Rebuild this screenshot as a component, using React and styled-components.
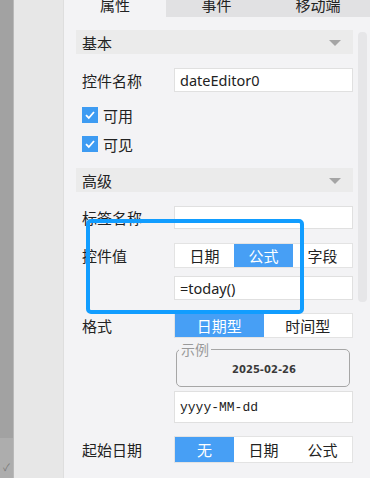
import React from 'react';
import styled, { createGlobalStyle } from 'styled-components';

const GlobalStyle = createGlobalStyle`
  body {
    margin: 0;
    font-family: "Noto Sans CJK SC", "Noto Sans", sans-serif;
    overflow: hidden;
  }
`;

const Page = styled.div`
  position: relative;
  display: flex;
  width: 370px;
  height: 478px;
  overflow: hidden;
  background: #f3f3f5;
`;

const DarkStrip = styled.div`
  width: 13px;
  display: flex;
  flex-direction: column;
  border-right: 1px solid #b9b9b9;
`;

const StripTop = styled.div`
  height: 438px;
  background: #a2a2a2;
`;

const StripBottom = styled.div`
  flex: 1;
  background: #adadad;
  display: flex;
  align-items: flex-end;
  justify-content: center;
  padding-bottom: 4px;
  color: #777;
  font-size: 10px;
`;

const SidePanel = styled.div`
  width: 49px;
  background: #e7e7e7;
  border-right: 1px solid #dedede;
`;

const Main = styled.div`
  flex: 1;
  display: flex;
  flex-direction: column;
  min-width: 0;
`;

const TabBar = styled.div`
  display: flex;
  height: 26px;
  margin-top: -9px;
  background: #e1e1e3;
`;

const Tab = styled.div`
  width: ${p => p.$w}px;
  display: flex;
  align-items: center;
  justify-content: center;
  font-size: 15px;
  color: #222;
  background: ${p => (p.$active ? '#f3f3f5' : 'transparent')};
`;

const Body = styled.div`
  flex: 1;
  display: flex;
  padding-top: 13px;
`;

const Content = styled.div`
  flex: 1;
  padding: 0 5px 0 12px;
  display: flex;
  flex-direction: column;
`;

const ScrollTrack = styled.div`
  width: 9px;
  margin: 2px 3px 0 0;
`;

const ScrollThumb = styled.div`
  height: 270px;
  border-radius: 4px;
  background: #e6e6e8;
`;

const SectionHeader = styled.div`
  height: 24px;
  background: #ebebeb;
  display: flex;
  align-items: center;
  justify-content: space-between;
  padding: 0 12px 0 6px;
  font-size: 15px;
  color: #222;
  margin-bottom: ${p => p.$mb}px;
`;

const Caret = styled.span`
  width: 0;
  height: 0;
  border-left: 6px solid transparent;
  border-right: 6px solid transparent;
  border-top: 6px solid #a5a5a5;
  margin-top: 2px;
`;

const Row = styled.div`
  display: grid;
  grid-template-columns: 98px 1fr;
  margin-bottom: ${p => p.$mb}px;
`;

const Label = styled.div`
  padding-left: 6px;
  height: ${p => p.$h || 24}px;
  display: flex;
  align-items: center;
  font-size: 15px;
  color: #222;
  white-space: nowrap;
`;

const Controls = styled.div`
  display: flex;
  flex-direction: column;
  gap: ${p => p.$gap || 0}px;
`;

const Input = styled.div`
  height: ${p => p.$h || 24}px;
  box-sizing: border-box;
  background: #fff;
  border: 1px solid #e0e0e0;
  display: flex;
  align-items: center;
  padding-left: 5px;
  margin-top: ${p => p.$mt || 0}px;
  font-size: ${p => (p.$mono ? 13 : 14.5)}px;
  font-family: ${p => (p.$mono ? '"Liberation Mono", "DejaVu Sans Mono", monospace' : '"Noto Sans", "Noto Sans CJK SC", sans-serif')};
  color: #222;
`;

const Segmented = styled.div`
  height: ${p => p.$h || 25}px;
  box-sizing: border-box;
  display: flex;
  background: #fff;
  border: 1px solid #e3e3e3;
`;

const Segment = styled.div`
  flex: 1;
  display: flex;
  align-items: center;
  justify-content: center;
  font-size: 15px;
  color: ${p => (p.$on ? '#fff' : '#222')};
  background: ${p => (p.$on ? '#479ff5' : 'transparent')};
`;

const CheckRow = styled.label`
  display: flex;
  align-items: center;
  gap: 5px;
  height: 16px;
  padding-left: 6px;
  font-size: 15px;
  color: #222;
  margin-bottom: ${p => p.$mb}px;
`;

const CheckBox = styled.span`
  width: 16px;
  height: 16px;
  background: #3d9bf2;
  display: flex;
  align-items: center;
  justify-content: center;
`;

const Sample = styled.fieldset`
  margin: 5px 3px 0 2px;
  padding: 0 0 8px;
  height: 44px;
  box-sizing: border-box;
  border: 1px solid #a6a6a6;
  border-radius: 5px;
  display: flex;
  justify-content: center;
`;

const Legend = styled.legend`
  padding: 0 2px;
  margin-left: 2px;
  font-size: 14px;
  line-height: 12px;
  color: #9a9a9a;
`;

const SampleDate = styled.div`
  width: 100%;
  text-align: center;
  font-family: "DejaVu Sans", sans-serif;
  font-weight: bold;
  font-size: 10px;
  color: #3a3a3a;
  padding-top: 9px;
  padding-left: 2px;
  box-sizing: border-box;
`;

const Highlight = styled.div`
  position: absolute;
  left: 86px;
  top: 219px;
  width: 218px;
  height: 95px;
  box-sizing: border-box;
  border: 4px solid #119dff;
  border-radius: 5px;
  pointer-events: none;
`;

const Check = () => (
  <svg width="12" height="12" viewBox="0 0 12 12">
    <path d="M2 6.2 L4.8 9 L10 3" fill="none" stroke="#fff" strokeWidth="1.8" />
  </svg>
);

const App = () => (
  <>
    <GlobalStyle />
    <Page>
      <DarkStrip>
        <StripTop />
        <StripBottom>✓</StripBottom>
      </DarkStrip>
      <SidePanel />
      <Main>
        <TabBar>
          <Tab $w={102} $active>属性</Tab>
          <Tab $w={101}>事件</Tab>
          <Tab $w={102}>移动端</Tab>
        </TabBar>
        <Body>
          <Content>
            <SectionHeader $mb={14}>基本<Caret /></SectionHeader>
            <Row $mb={15}>
              <Label>控件名称</Label>
              <Input>dateEditor0</Input>
            </Row>
            <CheckRow $mb={13}>
              <CheckBox><Check /></CheckBox>可用
            </CheckRow>
            <CheckRow $mb={16}>
              <CheckBox><Check /></CheckBox>可见
            </CheckRow>
            <SectionHeader $mb={14}>高级<Caret /></SectionHeader>
            <Row $mb={14}>
              <Label $h={23}>标签名称</Label>
              <Input $h={23} />
            </Row>
            <Row $mb={13}>
              <Label>控件值</Label>
              <Controls $gap={8}>
                <Segmented>
                  <Segment>日期</Segment>
                  <Segment $on>公式</Segment>
                  <Segment>字段</Segment>
                </Segmented>
                <Input>=today()</Input>
              </Controls>
            </Row>
            <Row $mb={13}>
              <Label>格式</Label>
              <Controls>
                <Segmented>
                  <Segment $on>日期型</Segment>
                  <Segment>时间型</Segment>
                </Segmented>
                <Sample>
                  <Legend>示例</Legend>
                  <SampleDate>2025-02-26</SampleDate>
                </Sample>
                <Input $h={32} $mt={4} $mono>yyyy-MM-dd</Input>
              </Controls>
            </Row>
            <Row $mb={0}>
              <Label $h={27}>起始日期</Label>
              <Segmented $h={27}>
                <Segment $on>无</Segment>
                <Segment>日期</Segment>
                <Segment>公式</Segment>
              </Segmented>
            </Row>
          </Content>
          <ScrollTrack>
            <ScrollThumb />
          </ScrollTrack>
        </Body>
      </Main>
      <Highlight />
    </Page>
  </>
);

export default App;
